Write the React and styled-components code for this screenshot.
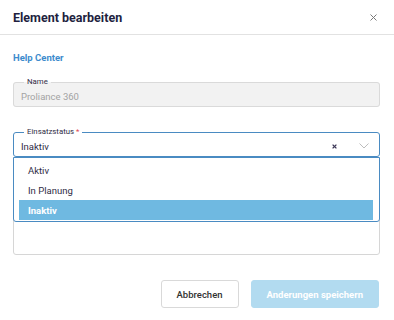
import React from 'react';
import styled, { createGlobalStyle } from 'styled-components';

const GlobalStyle = createGlobalStyle`
  html, body {
    margin: 0;
    padding: 0;
    background: #fff;
  }
  body {
    font-family: Roboto, "Liberation Sans", sans-serif;
    color: #2a2740;
  }
`;

const statusOptions = ['Aktiv', 'In Planung', 'Inaktiv'];

export default function App() {
  const selected = 'Inaktiv';

  return (
    <>
      <GlobalStyle />
      <Dialog>
        <Header>
          <Title>Element bearbeiten</Title>
          <CloseButton aria-label='Schließen'>
            <svg width='7' height='7' viewBox='0 0 7 7'>
              <path d='M0.5 0.5 L6.5 6.5 M6.5 0.5 L0.5 6.5' stroke='#7a7a7a' strokeWidth='1' />
            </svg>
          </CloseButton>
        </Header>

        <Body>
          <HelpLink href='#'>Help Center</HelpLink>

          <Field $disabled>
            <Legend>Name</Legend>
            <Value $muted>Proliance 360</Value>
          </Field>

          <SelectWrap>
            <Field $focused>
              <Legend>
                Einsatzstatus <Required>*</Required>
              </Legend>
              <Value>
                <span>{selected}</span>
                <Adornments>
                  <svg width='5' height='5' viewBox='0 0 5 5'>
                    <path d='M0.6 0.6 L4.4 4.4 M4.4 0.6 L0.6 4.4' stroke='#3b3656' strokeWidth='1.3' />
                  </svg>
                  <svg width='10' height='6' viewBox='0 0 10 6'>
                    <path d='M0.5 0.5 L5 5 L9.5 0.5' fill='none' stroke='#bdbdbd' strokeWidth='1' />
                  </svg>
                </Adornments>
              </Value>
            </Field>
            <Menu>
              {statusOptions.map(option => (
                <Option key={option} $active={option === selected}>
                  {option}
                </Option>
              ))}
            </Menu>
          </SelectWrap>

          <TextArea />
        </Body>

        <Footer>
          <Button>Abbrechen</Button>
          <Button $primary disabled>
            Anderungen speichern
          </Button>
        </Footer>
      </Dialog>
    </>
  );
}

const Dialog = styled.div`
  width: 394px;
  height: 320px;
  display: flex;
  flex-direction: column;
  background: #fff;
  overflow: hidden;
`;

const Header = styled.div`
  height: 34px;
  padding: 0 17px 0 13px;
  display: flex;
  align-items: center;
  justify-content: space-between;
  border-bottom: 1px solid #e2e2e2;
`;

const Title = styled.h1`
  margin: 0;
  font-size: 12.5px;
  font-weight: 700;
  color: #221f3f;
`;

const CloseButton = styled.button`
  border: 0;
  background: none;
  padding: 0;
  display: flex;
  cursor: pointer;
`;

const Body = styled.div`
  padding: 17px 14px 0 13px;
  display: flex;
  flex-direction: column;
`;

const HelpLink = styled.a`
  font-size: 9.5px;
  font-weight: 700;
  line-height: 12px;
  color: #3d8ccd;
  text-decoration: none;
  align-self: flex-start;
  margin-bottom: 14px;
`;

const Field = styled.fieldset`
  margin: 0;
  padding: 0 7px;
  min-width: 0;
  border: 1px solid ${({ $focused }) => ($focused ? '#4a8bc2' : '#dadada')};
  border-radius: 3px;
  background: ${({ $disabled }) => ($disabled ? '#f2f2f2' : '#fff')};
`;

const Legend = styled.legend`
  margin-left: 3px;
  padding: 0 3px;
  font-size: 7.8px;
  line-height: 8px;
  color: #2f2b45;
`;

const Required = styled.span`
  color: #e0474c;
`;

const Value = styled.div`
  height: 20px;
  display: flex;
  align-items: center;
  justify-content: space-between;
  font-size: 9.5px;
  color: ${({ $muted }) => ($muted ? '#a3a3a3' : '#2f2b45')};
`;

const Adornments = styled.div`
  display: flex;
  align-items: center;
  gap: 22px;
  padding-right: 3px;
`;

const SelectWrap = styled.div`
  position: relative;
  margin-top: 21px;
  z-index: 2;
`;

const Menu = styled.div`
  position: absolute;
  top: 100%;
  left: 0;
  right: 0;
  padding: 2px 6px 1px 5px;
  border: 1px solid #4a8bc2;
  border-radius: 0 0 3px 3px;
  background: #fff;
`;

const Option = styled.div`
  height: 20px;
  padding-left: 9px;
  display: flex;
  align-items: center;
  font-size: 9.5px;
  font-weight: ${({ $active }) => ($active ? 700 : 400)};
  color: ${({ $active }) => ($active ? '#fff' : '#2f2b45')};
  background: ${({ $active }) => ($active ? '#6fb9e1' : 'transparent')};
`;

const TextArea = styled.div`
  margin-top: 24px;
  height: 72px;
  border: 1px solid #d6d6d6;
  border-radius: 3px;
`;

const Footer = styled.div`
  margin-top: 25px;
  padding-right: 15px;
  display: flex;
  justify-content: flex-end;
  gap: 12px;
`;

const Button = styled.button`
  height: 28px;
  padding: 0 15px;
  border-radius: 3px;
  font-family: inherit;
  font-size: 9.5px;
  font-weight: ${({ $primary }) => ($primary ? 700 : 500)};
  color: ${({ $primary }) => ($primary ? '#fff' : '#333')};
  background: ${({ $primary }) => ($primary ? '#b2dbf0' : '#fff')};
  border: 1px solid ${({ $primary }) => ($primary ? '#b2dbf0' : '#d9d9d9')};
`;
